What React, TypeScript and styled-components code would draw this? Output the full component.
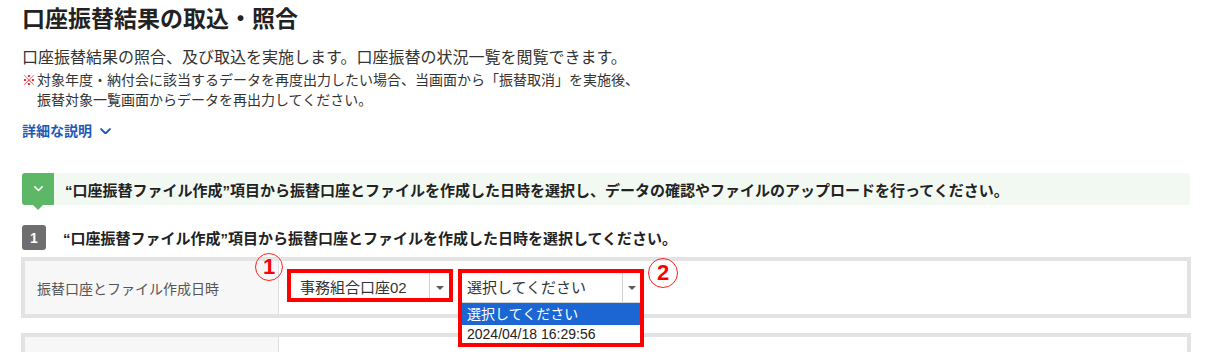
import React from "react";
import styled, { createGlobalStyle } from "styled-components";

const GlobalStyle = createGlobalStyle`
  html, body { margin: 0; padding: 0; background: #fff; overflow: hidden; }
  body { font-family: "Liberation Sans", "Noto Sans CJK JP", sans-serif; color: #333; }
  * { box-sizing: border-box; }
`;

const Page = styled.div`
  width: 1210px;
  height: 352px;
  overflow: hidden;
  padding: 4px 20px 0 22px;
`;

const Title = styled.h1`
  margin: 0;
  font-size: 23px;
  line-height: 30px;
  font-weight: 700;
  color: #222;
`;

const Lead = styled.p`
  margin: 13px 0 0;
  font-size: 16px;
  line-height: 22px;
  color: #333;
`;

const Note = styled.p`
  margin: 1px 0 0;
  font-size: 14px;
  line-height: 20px;
  color: #333;
  padding-left: 15px;
  text-indent: -15px;
`;

const Mark = styled.span`
  display: inline-block;
  width: 15px;
  text-indent: 0;
  color: #e60012;
`;

const DetailLink = styled.a`
  display: flex;
  align-items: center;
  gap: 8px;
  margin-top: 11px;
  font-size: 14px;
  line-height: 20px;
  font-weight: 700;
  color: #1d5bb8;
  text-decoration: none;
`;

const Banner = styled.div`
  display: flex;
  height: 32px;
  margin-top: 32px;
`;

const BannerIcon = styled.div`
  position: relative;
  width: 32px;
  height: 32px;
  background: #5cb766;
  border-radius: 3px 0 0 3px;
  display: flex;
  align-items: center;
  justify-content: center;
  &::after {
    content: "";
    position: absolute;
    left: 50%;
    bottom: -5px;
    margin-left: -5px;
    border-left: 5px solid transparent;
    border-right: 5px solid transparent;
    border-top: 5px solid #5cb766;
  }
`;

const BannerBody = styled.div`
  flex: 1;
  display: flex;
  align-items: center;
  padding-left: 11px;
  background: #f2f9f2;
  border-radius: 0 4px 4px 0;
  font-size: 15px;
  font-weight: 700;
  color: #222;
`;

const Step = styled.div`
  display: flex;
  align-items: center;
  gap: 17px;
  margin-top: 20px;
  height: 25px;
`;

const StepBadge = styled.span`
  width: 24px;
  height: 25px;
  border-radius: 3px;
  background: #6e6e6e;
  color: #fff;
  font-size: 14px;
  font-weight: 700;
  display: flex;
  align-items: center;
  justify-content: center;
`;

const StepText = styled.span`
  font-size: 15px;
  font-weight: 700;
  color: #222;
`;

const Table = styled.div<{ $mt: number }>`
  display: flex;
  height: 61px;
  margin: ${(p) => p.$mt}px -1px 0 -1px;
  border: 4px solid #e3e3e3;
`;

const LabelCell = styled.div`
  width: 254px;
  flex: none;
  display: flex;
  align-items: center;
  padding-left: 12px;
  background: #f7f7f7;
  border-right: 1px solid #dedede;
  font-size: 14px;
  color: #555;
`;

const ContentCell = styled.div`
  position: relative;
  flex: 1;
  display: flex;
  align-items: flex-start;
  gap: 5px;
  padding: 8px 0 0 8px;
  background: #fff;
`;

const Frame = styled.div`
  position: relative;
  z-index: 1;
  border: 4px solid #ff0000;
  background: #fff;
`;

const Select = styled.div<{ $w: number; $h: number; $underline?: boolean }>`
  display: flex;
  width: ${(p) => p.$w}px;
  height: ${(p) => p.$h}px;
  border-bottom: ${(p) => (p.$underline ? "1px solid #d4d4d4" : "none")};
`;

const SelectValue = styled.div<{ $pl: number }>`
  flex: 1;
  padding: 6px 0 0 ${(p) => p.$pl}px;
  font-size: 15px;
  line-height: 18px;
  color: #333;
  white-space: nowrap;
`;

const SelectArrow = styled.div<{ $w: number }>`
  width: ${(p) => p.$w}px;
  flex: none;
  display: flex;
  justify-content: center;
  padding-top: 13px;
  border-left: 1px solid #d0d0d0;
  &::before {
    content: "";
    width: 0;
    height: 0;
    border-left: 4px solid transparent;
    border-right: 4px solid transparent;
    border-top: 4px solid #5a5a5a;
  }
`;

const OptionList = styled.ul`
  list-style: none;
  margin: 0;
  padding: 0;
`;

const Option = styled.li<{ $active?: boolean; $h: number }>`
  height: ${(p) => p.$h}px;
  line-height: ${(p) => p.$h}px;
  padding-left: 5px;
  font-size: 14px;
  white-space: nowrap;
  background: ${(p) => (p.$active ? "#1b66d2" : "#fff")};
  color: ${(p) => (p.$active ? "#fff" : "#222")};
`;

const Callout = styled.span<{ $x: number; $y: number; $d: number }>`
  position: absolute;
  left: ${(p) => p.$x}px;
  top: ${(p) => p.$y}px;
  width: ${(p) => p.$d}px;
  height: ${(p) => p.$d}px;
  border: 1px solid #ff2020;
  border-radius: 50%;
  display: flex;
  align-items: center;
  justify-content: center;
  color: #ff0000;
  font-family: "Liberation Sans", Arial, sans-serif;
  font-size: 22px;
  font-weight: 700;
  z-index: 2;
`;

const Chevron = ({ color, size }: { color: string; size: number }) => (
  <svg width={size} height={size * 0.6} viewBox="0 0 10 6" fill="none">
    <path d="M1 1l4 4 4-4" stroke={color} strokeWidth="1.8" strokeLinecap="round" strokeLinejoin="round" />
  </svg>
);

export default function App() {
  return (
    <>
      <GlobalStyle />
      <Page>
        <Title>口座振替結果の取込・照合</Title>
        <Lead>口座振替結果の照合、及び取込を実施します。口座振替の状況一覧を閲覧できます。</Lead>
        <Note>
          <Mark>※</Mark>対象年度・納付会に該当するデータを再度出力したい場合、当画面から「振替取消」を実施後、
          <br />
          振替対象一覧画面からデータを再出力してください。
        </Note>
        <DetailLink href="#">
          詳細な説明
          <Chevron color="#1d5bb8" size={11} />
        </DetailLink>

        <Banner>
          <BannerIcon>
            <Chevron color="#fff" size={9} />
          </BannerIcon>
          <BannerBody>
            “口座振替ファイル作成”項目から振替口座とファイルを作成した日時を選択し、データの確認やファイルのアップロードを行ってください。
          </BannerBody>
        </Banner>

        <Step>
          <StepBadge>1</StepBadge>
          <StepText>“口座振替ファイル作成”項目から振替口座とファイルを作成した日時を選択してください。</StepText>
        </Step>

        <Table $mt={7}>
          <LabelCell>振替口座とファイル作成日時</LabelCell>
          <ContentCell>
            <Frame>
              <Select $w={158} $h={25}>
                <SelectValue $pl={9}>事務組合口座02</SelectValue>
                <SelectArrow $w={20} />
              </Select>
            </Frame>
            <Frame>
              <Select $w={178} $h={30} $underline>
                <SelectValue $pl={5}>選択してください</SelectValue>
                <SelectArrow $w={18} />
              </Select>
              <OptionList>
                <Option $active $h={22}>選択してください</Option>
                <Option $h={18}>2024/04/18 16:29:56</Option>
              </OptionList>
            </Frame>
            <Callout $x={-24} $y={-8} $d={28}>1</Callout>
            <Callout $x={369} $y={-3} $d={30}>2</Callout>
          </ContentCell>
        </Table>

        <Table $mt={15}>
          <LabelCell />
          <ContentCell />
        </Table>
      </Page>
    </>
  );
}
